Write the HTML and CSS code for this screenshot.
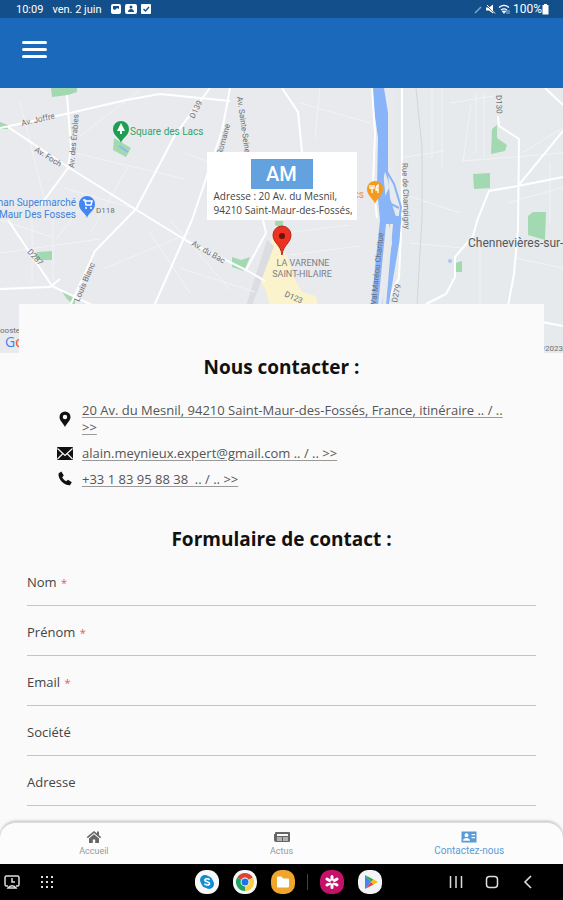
FILE: index.html
```html
<!DOCTYPE html>
<html lang="fr">
<head>
    <meta charset="UTF-8">
    <meta name="viewport" content="width=device-width, initial-scale=1.0">
    <title>Contactez-nous</title>
    <link rel="stylesheet" href="styles.css">
</head>
<body>

<div class="status-bar">
    <span>10:09</span>
    <span>ven. 2 juin</span>
    <svg class="status-notifs" width="40" height="12" viewBox="0 0 40 12">
        <rect x="0" y="1" width="10" height="10" rx="2" fill="#fff"/>
        <path d="M2 3h6v3L6 5 4 7 2 6z" fill="#134f8b"/>
        <rect x="14" y="1" width="12" height="10" rx="2" fill="#fff"/>
        <circle cx="20" cy="4" r="1.5" fill="#134f8b"/>
        <path d="M17 9c0-4 6-4 6 0z" fill="#134f8b"/>
        <rect x="30" y="1" width="10" height="10" rx="1" fill="#fff"/>
        <path d="M32.500 6l2 2 3.500-4" fill="none" stroke="#134f8b" stroke-width="1.400"/>
    </svg>
    <svg class="status-icons" width="36" height="12" viewBox="0 0 36 12">
        <path d="M1 10l6-6" stroke="#7fa7cf" stroke-width="1.500"/>
        <path d="M12 4.500h3l4-3v9l-4-3h-3z" fill="#fff"/>
        <path d="M12 2l9 9" stroke="#134f8b" stroke-width="1"/>
        <path d="M13 2l8 8.500" stroke="#fff" stroke-width="1"/>
        <path d="M25 4.500c3-2.500 7-2.500 10 0M27 7c2-1.600 4-1.600 6 0" fill="none" stroke="#fff" stroke-width="1.300"/>
        <path d="M28 8l2 2.500L32 8zM33 7v4M35 7v4" fill="#fff" stroke="#fff" stroke-width=".6"/>
    </svg>
    <span class="battery">100%
        <svg width="7" height="12" viewBox="0 0 7 12"><path d="M2 1h3v1h1.500v9.500h-6V2H2z" fill="#fff"/></svg>
    </span>
</div>

<header class="header">
    <button class="menu-btn" aria-label="Menu"><i></i><i></i><i></i></button>
</header>

<main class="content">
    <div class="map">
        <svg class="map-canvas" viewBox="0 0 563 265" preserveAspectRatio="xMidYMid slice">
            <rect width="563" height="265" fill="#e8eaed"/>
            <path d="M395 0h168v265H395z" fill="#e6eaed"/>
            <path d="M272 150l-13 42 6 8 5 18h48l-2-10-14-4-8-14-7-22z" fill="#fbf3cc"/>
            <path d="M267 152l-21 66h6l22-60z" fill="#dcdde3"/>

            <!-- parks -->
            <g fill="#a3d9b1">
                <path d="M51 0h26v4l-9 3-16 2z"/>
                <path d="M0 34l8 3v4H0z"/>
                <path d="M114 50l17 10-5 9-13-7z"/>
                <path d="M37 164l15-1v9H39l-4-4z"/>
                <path d="M60 201l15 7v10l-8-7z"/>
                <path d="M232 169l9 3 9-3-6 14-12-4z"/>
                <path d="M275 133h8v8l-8-4z"/>
                <path d="M492 41l5-4v13l10 7-2 6-14 3z"/>
                <path d="M473 86l17-1v15l-16 1z"/>
                <path d="M528 128l5-4h13l-1 28-17-5z"/>
                <path d="M455 175l7-2v11h-6z"/>
            </g>
            <path d="M119 58l9 6" stroke="#8db9f0" stroke-width="2"/>
            <circle cx="450" cy="173" r="2" fill="#a9c8f5"/>

            <!-- small streets -->
            <g stroke="#f2f3f5" fill="none">
                <path d="M0 132l52 17M32 132v62M53 132v60M0 165l100-14M80 48l60-46M75 65l110 26M64 100l68 20M91 107l-35 44M129 77l-38 67M20 14l25 100M185 65l45 17M150 145l40 60M170 132l60 70M105 180l85-35M180 180l75 24M285 145l65-8M290 167l70-9M300 15l70 20M320 0l-5 50"/>
                <path d="M432 0v70M442 0v80M476 5v60M484 5v65M462 73l101-8M463 74l8-58M450 15l50-8M508 115l55-16M400 105l60 20M410 155l52 5M480 160v58M515 170l48 10M522 65l41-25M550 75v60M400 70l44-7"/>
            </g>
            <!-- main streets -->
            <g stroke="#fff" stroke-width="2" fill="none" stroke-linejoin="round">
                <path d="M0 40l70-15 56-13 34-6 70 7M8 39l60 40 67 42 52 32 61 30 17 10"/>
                <path d="M67 7l4 53-3 20-28 38M210 0l-35 47-39 74-41 42-25 55M8 132l44 66 42 20M0 201l50-2 10-8M192 132l-38 86"/>
                <path d="M230 0l-8 43-30 89M263 132l3 13-20 37M282 0l16 24 4 40M402 0v120l-3 70-14 28"/>
            </g>
            <g stroke="#fff" stroke-width="2" fill="none">
                <path d="M498 28l1 10 20 13-1 90-4 45-6 32M518 98l45-55M563 89l-45 9-29 5-12 30-4 15-18 21v20l-9 17-20 10M545 0l18 17M542 234l21 4"/>
            </g>
            <path d="M416 0l6 60 0 70-5 88" fill="none" stroke="#d3d6d9"/>

            <!-- river -->
            <path d="M371 0h13l4 25v60l2 25 7 22v20l-3 14-5-30h-3l-8 82h-7l9-86-3-32 1-50z" fill="#8ab4f8"/>
            <path d="M398 128l-2 24-11 66" fill="none" stroke="#8ab4f8" stroke-width="7"/>
            <path d="M386 82l8 14 7 23-2 15M387 114l12 6" fill="none" stroke="#8ab4f8" stroke-width="2"/>
            <path d="M385 84c-3 8 1 16 0 24l4-8c0-6-2-11-4-16z" fill="#e6eaed"/>
            <path d="M393 136l-7 82h-4l8-82z" fill="#e6eaed"/>
            <path d="M372 0l3 45-2 50 4 35" fill="none" stroke="#fff" stroke-width="2"/>

            <!-- street names -->
            <g class="map-street">
                <text transform="translate(22 38) rotate(-13)">Av. Joffre</text>
                <text transform="translate(34 63) rotate(32)">Av. Foch</text>
                <text transform="translate(74 80) rotate(-85)">Av. des Érables</text>
                <text transform="translate(194 31) rotate(-63)">D139</text>
                <text transform="translate(222 67) rotate(-75)">Romaine</text>
                <text transform="translate(237 9) rotate(82)">Av. Sainte-Seine</text>
                <text x="96" y="125">D118</text>
                <text transform="translate(27 164) rotate(48)">D287</text>
                <text transform="translate(79 214) rotate(-67)">Louis Blanc</text>
                <text transform="translate(191 157) rotate(30)">Av. du Bac</text>
                <text transform="translate(284 208) rotate(24)">D123</text>
                <text transform="translate(402 75) rotate(88)">Rue de Champigny</text>
                <text transform="translate(496 7) rotate(88)">D130</text>
                <text transform="translate(376 217) rotate(-84)">Val Maréou Charitue</text>
                <text transform="translate(397 215) rotate(-78)">D279</text>
            </g>

            <!-- places -->
            <g class="map-place">
                <text x="130" y="47" fill="#34a36a">Square des Lacs</text>
                <text x="76" y="118" text-anchor="end" fill="#3f83df">han Supermarché</text>
                <text x="76" y="130" text-anchor="end" fill="#3f83df">Maur Des Fosses</text>
                <text x="364" y="110" text-anchor="end" fill="#e8923a">cs</text>
            </g>
            <g class="map-town">
                <text x="303" y="178" text-anchor="middle">LA VARENNE</text>
                <text x="302" y="189" text-anchor="middle">SAINT-HILAIRE</text>
            </g>
            <text class="map-city" x="468" y="159">Chennevières-sur-</text>

            <!-- pins -->
            <path d="M121 55c-1-5-8-7-8-14a8 8 0 0 1 16 0c0 7-7 9-8 14z" fill="#1e9e50"/>
            <path d="M121 35l4 8h-3v3h-2v-3h-3z" fill="#fff"/>
            <path d="M87 130c-1-5-8-7-8-14a8 8 0 0 1 16 0c0 7-7 9-8 14z" fill="#4285f4"/>
            <path d="M83 112h2l1 5h5l1-4h-6" fill="none" stroke="#fff" stroke-width="1.500"/>
            <circle cx="86" cy="120" r="1" fill="#fff"/><circle cx="91" cy="120" r="1" fill="#fff"/>
            <path d="M375 116c-1-5-8-8-8-15a8 8 0 0 1 16 0c0 7-7 10-8 15z" fill="#f29b1d"/>
            <path d="M372 97v8M370 97v3h4v-3M378 105v-8c-2 1-2 3-2 5h2" fill="none" stroke="#fff" stroke-width="1.300"/>
            <path d="M282 167c-1-10-9-12-9-20a9 9 0 0 1 18 0c0 8-8 10-9 20z" fill="#ea3323" stroke="#b9271c"/>
            <circle cx="282" cy="148" r="3" fill="#6e0f0a"/>

            <g class="map-logo">
                <text x="5" y="259"><tspan fill="#4285f4">G</tspan><tspan fill="#ea4335">o</tspan></text>
            </g>
            <g class="map-street">
                <text x="0" y="245">ooste</text>
                <text x="563" y="263" text-anchor="end">©2023</text>
            </g>
        </svg>
        <div class="map-info">
            <div class="map-info-logo">AM</div>
            <p>Adresse : 20 Av. du Mesnil, 94210 Saint-Maur-des-Fossés, France</p>
        </div>
    </div>

    <div class="sheet">
        <h2>Nous contacter :</h2>
        <ul class="contact-list">
            <li>
                <svg width="18" height="18" viewBox="0 0 18 18"><path fill-rule="evenodd" d="M9 17C7 13 3.500 10.500 3.500 7a5.500 5.500 0 0 1 11 0c0 3.500-3.500 6-5.500 10zM9 9.200a2.200 2.200 0 1 0 0-4.400 2.200 2.200 0 0 0 0 4.400z"/></svg>
                <a href="#">20 Av. du Mesnil, 94210 Saint-Maur-des-Fossés, France, itinéraire .. / .. &gt;&gt;</a>
            </li>
            <li>
                <svg width="18" height="18" viewBox="0 0 18 18"><rect x="1" y="2" width="16" height="13" rx="1"/><path d="M1.500 3.500L9 10.500l7.500-7M1.500 14l5-5M16.500 14l-5-5" fill="none" stroke="#fafafa" stroke-width="1.200"/></svg>
                <a href="#">alain.meynieux.expert@gmail.com .. / .. &gt;&gt;</a>
            </li>
            <li>
                <svg width="18" height="18" viewBox="0 0 18 18"><path d="M2.500 2.500l2.800-2 2.500 4-1.600 1.700c.9 1.900 2 3 4 4l1.800-1.500 3.800 2.500-1.800 3C8 14.500 2 8.500 2.500 2.500z"/></svg>
                <a href="#">+33 1 83 95 88 38&nbsp; .. / .. &gt;&gt;</a>
            </li>
        </ul>

        <h2>Formulaire de contact :</h2>
        <form class="contact-form">
            <div class="field">
                <label for="nom">Nom <em>*</em></label>
                <input type="text" id="nom" required>
            </div>
            <div class="field">
                <label for="prenom">Prénom <em>*</em></label>
                <input type="text" id="prenom" required>
            </div>
            <div class="field">
                <label for="email">Email <em>*</em></label>
                <input type="email" id="email" required>
            </div>
            <div class="field">
                <label for="societe">Société</label>
                <input type="text" id="societe">
            </div>
            <div class="field">
                <label for="adresse">Adresse</label>
                <input type="text" id="adresse">
            </div>
        </form>
    </div>
</main>

<nav class="tabs">
    <a href="#">
        <svg width="16" height="14" viewBox="0 0 16 14"><path d="M8 1L.8 7l1 1.200L8 3l6.200 5.200 1-1.200L13 5.200V1.500h-2v2z"/><path d="M8 4.200L3 8.400V13h3.800V9.500h2.400V13H13V8.400z"/></svg>
        Accueil
    </a>
    <a href="#">
        <svg width="16" height="14" viewBox="0 0 16 14"><path fill-rule="evenodd" d="M2 2h13a1 1 0 0 1 1 1v8a1 1 0 0 1-1 1H2a2 2 0 0 1-2-2V4h1V3a1 1 0 0 1 1-1zm1 2v2h11V4zm0 3.500v1h5v-1zm6 0v1h5v-1zM3 9.500v1h5v-1zm6 0v1h5v-1z"/></svg>
        Actus
    </a>
    <a href="#" class="active">
        <svg width="16" height="14" viewBox="0 0 16 14"><path fill-rule="evenodd" d="M.5 1.500h15v11H.5zM5.500 7.200a2 2 0 1 0 0-4 2 2 0 0 0 0 4zM2 10.800h7C9 7.200 2 7.200 2 10.800zM10.500 4v1.200H14V4zm0 3v1.200H14V7z"/></svg>
        Contactez-nous
    </a>
</nav>

<div class="system-bar">
    <div class="system-left">
        <button aria-label="Récents">
            <svg width="16" height="16" viewBox="0 0 16 16" fill="none" stroke="#ddd" stroke-width="1.500"><path d="M4 12H2.500A1.500 1.500 0 0 1 1 10.500v-7A1.500 1.500 0 0 1 2.500 2h11A1.500 1.500 0 0 1 15 3.500v7a1.500 1.500 0 0 1-1.500 1.500H12M8 4v4h3"/><path d="M4 14c2-3 6-3 8 0z"/></svg>
        </button>
        <button aria-label="Applications">
            <svg width="14" height="14" viewBox="0 0 14 14" fill="#ddd"><path d="M1 1h2v2H1zM6 1h2v2H6zM11 1h2v2h-2zM1 6h2v2H1zM6 6h2v2H6zM11 6h2v2h-2zM1 11h2v2H1zM6 11h2v2H6zM11 11h2v2h-2z"/></svg>
        </button>
    </div>
    <div class="system-apps">
        <button aria-label="Skype">
            <svg width="24" height="24" viewBox="0 0 24 24"><rect width="24" height="24" rx="11" fill="#f7f8fa"/><circle cx="10" cy="10" r="5" fill="#1686c9"/><circle cx="14" cy="14" r="5" fill="#1686c9"/><circle cx="12" cy="12" r="6" fill="#0f8fd6"/><path d="M14.500 9.800c-1-1.600-5-1.300-4.700.6.300 1.700 4.700 1 4.700 3 0 2-4 2-5 .2" fill="none" stroke="#fff" stroke-width="1.600"/></svg>
        </button>
        <button aria-label="Chrome">
            <svg width="24" height="24" viewBox="0 0 24 24"><rect width="24" height="24" rx="11" fill="#f7f8fa"/><path d="M12 12L4.200 7.500a9 9 0 0 1 15.600 0z" fill="#db4437"/><path d="M12 12l7.800-4.500A9 9 0 0 1 12 21z" fill="#ffcd40"/><path d="M12 12v9A9 9 0 0 1 4.200 7.500z" fill="#1da462"/><circle cx="12" cy="12" r="4.400" fill="#fff"/><circle cx="12" cy="12" r="3.500" fill="#1a73e8"/></svg>
        </button>
        <button aria-label="Mes fichiers">
            <svg width="24" height="24" viewBox="0 0 24 24"><rect width="24" height="24" rx="10" fill="#f0a52c"/><path d="M6 7.500a1 1 0 0 1 1-1h3.500l1.500 2h5a1 1 0 0 1 1 1v7a1 1 0 0 1-1 1H7a1 1 0 0 1-1-1z" fill="#fff"/></svg>
        </button>
        <span class="divider"></span>
        <button aria-label="Galerie">
            <svg width="24" height="24" viewBox="0 0 24 24"><rect width="24" height="24" rx="10" fill="#c4126b"/><path d="M12 6.500v11M7 9l10 6M17 9L7 15" stroke="#fff" stroke-width="3" stroke-linecap="round"/><circle cx="12" cy="12" r="1.600" fill="#c4126b"/></svg>
        </button>
        <button aria-label="Play Store">
            <svg width="24" height="24" viewBox="0 0 24 24"><rect width="24" height="24" rx="10" fill="#f3f4f6"/><path d="M7 5l6 7-6 7z" fill="#4285f4"/><path d="M7 5l8.500 4.500L13 12z" fill="#34a853"/><path d="M7 19l8.500-4.500L13 12z" fill="#ea4335"/><path d="M15.500 9.500L20 12l-4.500 2.500L13 12z" fill="#fbbc04"/></svg>
        </button>
    </div>
    <div class="system-keys">
        <button aria-label="Applications récentes">
            <svg width="14" height="14" viewBox="0 0 14 14" stroke="#ddd" stroke-width="1.500"><path d="M1.500 1v12M7 1v12M12.500 1v12"/></svg>
        </button>
        <button aria-label="Accueil">
            <svg width="14" height="14" viewBox="0 0 14 14" fill="none" stroke="#ddd" stroke-width="1.500"><rect x="1.500" y="1.500" width="11" height="11" rx="3"/></svg>
        </button>
        <button aria-label="Retour">
            <svg width="14" height="14" viewBox="0 0 14 14" fill="none" stroke="#ddd" stroke-width="1.600"><path d="M10 1L4 7l6 6"/></svg>
        </button>
    </div>
</div>

</body>
</html>
```
FILE: styles.css
```css
* {
    box-sizing: border-box;
}

body {
    margin: 0;
    height: 100vh;
    display: flex;
    flex-direction: column;
    font-family: "Open Sans", "Noto Sans", sans-serif;
    font-size: 13px;
    line-height: 17px;
    color: #444;
    background: #fafafa;
}

button {
    padding: 0;
    border: none;
    background: none;
    cursor: pointer;
}

svg {
    display: block;
    flex-shrink: 0;
}

/* Status bar */
.status-bar {
    display: flex;
    align-items: center;
    gap: 9px;
    height: 18px;
    flex-shrink: 0;
    padding: 0 14px 0 16px;
    background: #134f8b;
    color: #fff;
    font-family: Roboto, sans-serif;
    font-size: 11px;
}

.status-icons {
    margin-left: auto;
}

.battery {
    display: flex;
    align-items: center;
    margin-left: -6px;
    font-size: 12px;
}

/* Header */
.header {
    display: flex;
    align-items: center;
    height: 70px;
    flex-shrink: 0;
    padding: 0 22px 8px;
    background: #1b69bb;
}

.menu-btn {
    display: flex;
    flex-direction: column;
    gap: 4px;
    width: 25px;
}

.menu-btn i {
    height: 3px;
    border-radius: 2px;
    background: #fff;
}

.content {
    flex: 1;
    min-height: 0;
    overflow-y: auto;
    scrollbar-width: none;
}

/* Map */
.map {
    position: relative;
    display: flex;
    justify-content: center;
}

.map-canvas {
    width: 100%;
    height: 265px;
}

.map-street {
    font-family: Roboto, sans-serif;
    font-size: 8px;
    fill: #6b6f74;
}

.map-place {
    font-family: Roboto, sans-serif;
    font-size: 10px;
}

.map-town {
    font-family: Roboto, sans-serif;
    font-size: 9px;
    fill: #7b7f85;
}

.map-city {
    font-family: Roboto, sans-serif;
    font-size: 12px;
    fill: #55585c;
}

.map-logo {
    font-family: "Open Sans", sans-serif;
    font-size: 14px;
}

.map-info {
    position: absolute;
    top: 64px;
    width: 150px;
    height: 68px;
    padding: 7px 0 0 7px;
    overflow: hidden;
    background: #fff;
}

.map-info-logo {
    width: 62px;
    margin-left: 37px;
    background: #64a1df;
    color: #fff;
    font-family: Roboto, sans-serif;
    font-size: 20px;
    font-weight: 500;
    line-height: 30px;
    text-align: center;
}

.map-info p {
    margin: 0;
    font-size: 10px;
    line-height: 14px;
}

/* Contact sheet */
.sheet {
    position: relative;
    margin: -49px 19px 0;
    padding: 51px 8px 0;
    background: #fafafa;
}

h2 {
    margin: 0;
    color: #111;
    font-size: 19px;
    font-weight: 700;
    line-height: 24px;
    text-align: center;
}

.contact-list {
    display: flex;
    flex-direction: column;
    gap: 9px;
    margin: 0;
    padding: 23px 28px 39px 29px;
    list-style: none;
}

.contact-list li {
    display: flex;
    align-items: center;
    gap: 8px;
}

.contact-list svg {
    margin: -1px 0;
    fill: #111;
}

.contact-list a {
    color: #555;
    text-decoration-color: #999;
    text-underline-offset: 2px;
}

/* Form */
.field {
    display: flex;
    align-items: flex-start;
    gap: 8px;
    height: 50px;
    padding-top: 18px;
    border-bottom: 1px solid #c4c4c4;
}

.contact-form {
    padding-top: 5px;
}

.field em {
    margin-left: 1px;
    color: #e05a5a;
    font-size: 11px;
    font-style: normal;
}

.field input {
    flex: 1;
    min-width: 0;
    height: 18px;
    padding: 0;
    border: none;
    outline: none;
    background: transparent;
    font: inherit;
}

/* Bottom tabs */
.tabs {
    display: flex;
    height: 42px;
    flex-shrink: 0;
    border-top: 1px solid #ddd;
    border-radius: 16px 16px 0 0;
    background: #fcfcfc;
    box-shadow: 0 -1px 3px rgba(0, 0, 0, 0.25);
    position: relative;
}

.tabs a {
    flex: 1;
    display: flex;
    flex-direction: column;
    align-items: center;
    padding-top: 7px;
    color: #999;
    fill: #666;
    font-family: Roboto, sans-serif;
    font-size: 9px;
    line-height: 14px;
    text-decoration: none;
}

.tabs .active {
    color: #5b9bd5;
    fill: #5b9bd5;
    font-size: 10px;
}

/* Android navigation bar */
.system-bar {
    display: flex;
    align-items: center;
    justify-content: space-between;
    height: 36px;
    flex-shrink: 0;
    padding: 0 28px 0 4px;
    background: #000;
}

.system-left,
.system-apps,
.system-keys {
    display: flex;
    align-items: center;
}

.system-left {
    gap: 20px;
}

.system-apps {
    gap: 14px;
    margin-left: 74px;
}

.system-keys {
    gap: 22px;
}

.divider {
    width: 1px;
    height: 16px;
    margin: 0 -2px;
    background: #444;
}
```
